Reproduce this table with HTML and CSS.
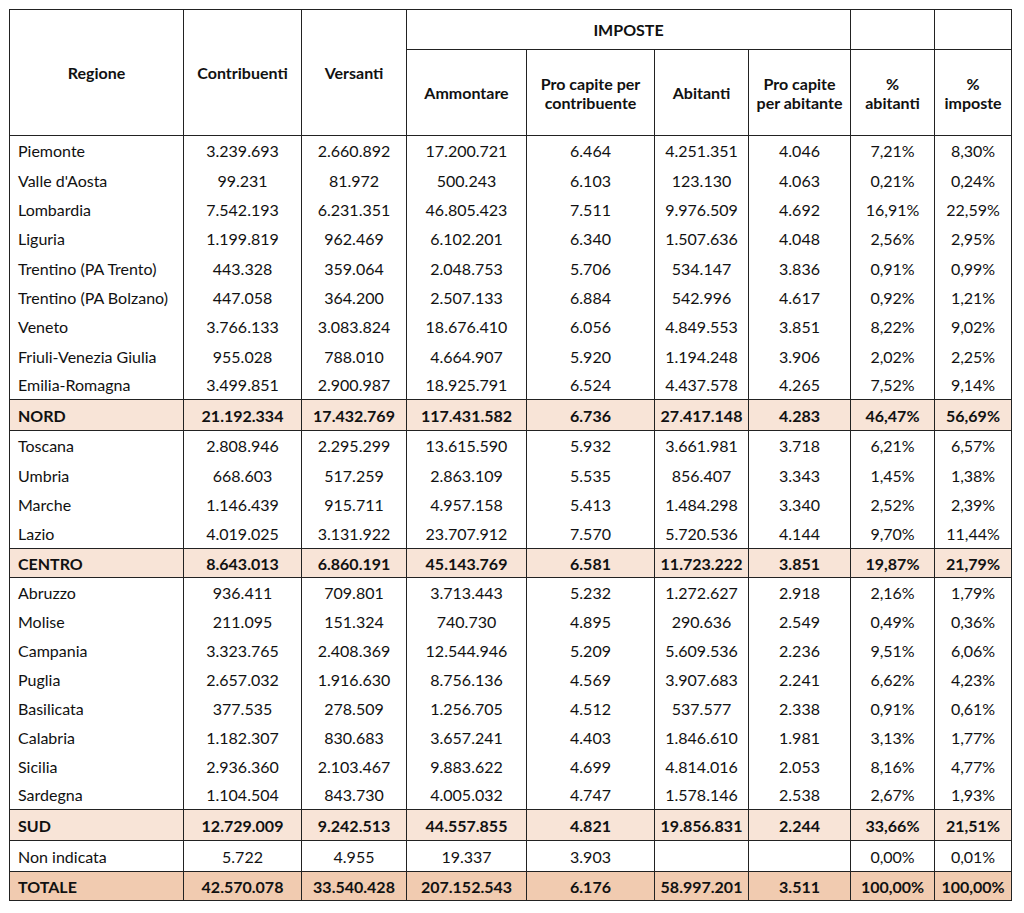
FILE: index.html
```html
<!DOCTYPE html>
<html lang="it">
<head>
<meta charset="utf-8">
<title>Imposte per regione</title>
<link rel="stylesheet" href="styles.css">
</head>
<body>
<table class="tax">
  <colgroup>
    <col class="c-reg"><col class="c-contr"><col class="c-vers"><col class="c-amm"><col class="c-pcc"><col class="c-ab"><col class="c-pca"><col class="c-pab"><col class="c-pimp">
  </colgroup>
  <thead>
    <tr class="h1">
      <th rowspan="2">Regione</th>
      <th rowspan="2">Contribuenti</th>
      <th rowspan="2">Versanti</th>
      <th colspan="4">IMPOSTE</th>
      <th></th>
      <th></th>
    </tr>
    <tr class="h2">
      <th>Ammontare</th>
      <th>Pro capite per<br>contribuente</th>
      <th>Abitanti</th>
      <th>Pro capite<br>per abitante</th>
      <th>%<br>abitanti</th>
      <th>%<br>imposte</th>
    </tr>
  </thead>
  <tbody class="grp">
    <tr class="r30"><td>Piemonte</td><td>3.239.693</td><td>2.660.892</td><td>17.200.721</td><td>6.464</td><td>4.251.351</td><td>4.046</td><td>7,21%</td><td>8,30%</td></tr>
    <tr class="r29"><td>Valle d'Aosta</td><td>99.231</td><td>81.972</td><td>500.243</td><td>6.103</td><td>123.130</td><td>4.063</td><td>0,21%</td><td>0,24%</td></tr>
    <tr class="r29"><td>Lombardia</td><td>7.542.193</td><td>6.231.351</td><td>46.805.423</td><td>7.511</td><td>9.976.509</td><td>4.692</td><td>16,91%</td><td>22,59%</td></tr>
    <tr class="r30"><td>Liguria</td><td>1.199.819</td><td>962.469</td><td>6.102.201</td><td>6.340</td><td>1.507.636</td><td>4.048</td><td>2,56%</td><td>2,95%</td></tr>
    <tr class="r29"><td>Trentino (PA Trento)</td><td>443.328</td><td>359.064</td><td>2.048.753</td><td>5.706</td><td>534.147</td><td>3.836</td><td>0,91%</td><td>0,99%</td></tr>
    <tr class="r29"><td>Trentino (PA Bolzano)</td><td>447.058</td><td>364.200</td><td>2.507.133</td><td>6.884</td><td>542.996</td><td>4.617</td><td>0,92%</td><td>1,21%</td></tr>
    <tr class="r30"><td>Veneto</td><td>3.766.133</td><td>3.083.824</td><td>18.676.410</td><td>6.056</td><td>4.849.553</td><td>3.851</td><td>8,22%</td><td>9,02%</td></tr>
    <tr class="r29"><td>Friuli-Venezia Giulia</td><td>955.028</td><td>788.010</td><td>4.664.907</td><td>5.920</td><td>1.194.248</td><td>3.906</td><td>2,02%</td><td>2,25%</td></tr>
    <tr class="r29"><td>Emilia-Romagna</td><td>3.499.851</td><td>2.900.987</td><td>18.925.791</td><td>6.524</td><td>4.437.578</td><td>4.265</td><td>7,52%</td><td>9,14%</td></tr>
  </tbody>
  <tbody class="sub">
    <tr class="r31"><td>NORD</td><td>21.192.334</td><td>17.432.769</td><td>117.431.582</td><td>6.736</td><td>27.417.148</td><td>4.283</td><td>46,47%</td><td>56,69%</td></tr>
  </tbody>
  <tbody class="grp">
    <tr class="r30"><td>Toscana</td><td>2.808.946</td><td>2.295.299</td><td>13.615.590</td><td>5.932</td><td>3.661.981</td><td>3.718</td><td>6,21%</td><td>6,57%</td></tr>
    <tr class="r29"><td>Umbria</td><td>668.603</td><td>517.259</td><td>2.863.109</td><td>5.535</td><td>856.407</td><td>3.343</td><td>1,45%</td><td>1,38%</td></tr>
    <tr class="r29"><td>Marche</td><td>1.146.439</td><td>915.711</td><td>4.957.158</td><td>5.413</td><td>1.484.298</td><td>3.340</td><td>2,52%</td><td>2,39%</td></tr>
    <tr class="r30"><td>Lazio</td><td>4.019.025</td><td>3.131.922</td><td>23.707.912</td><td>7.570</td><td>5.720.536</td><td>4.144</td><td>9,70%</td><td>11,44%</td></tr>
  </tbody>
  <tbody class="sub">
    <tr class="r29"><td>CENTRO</td><td>8.643.013</td><td>6.860.191</td><td>45.143.769</td><td>6.581</td><td>11.723.222</td><td>3.851</td><td>19,87%</td><td>21,79%</td></tr>
  </tbody>
  <tbody class="grp">
    <tr class="r29"><td>Abruzzo</td><td>936.411</td><td>709.801</td><td>3.713.443</td><td>5.232</td><td>1.272.627</td><td>2.918</td><td>2,16%</td><td>1,79%</td></tr>
    <tr class="r29"><td>Molise</td><td>211.095</td><td>151.324</td><td>740.730</td><td>4.895</td><td>290.636</td><td>2.549</td><td>0,49%</td><td>0,36%</td></tr>
    <tr class="r29"><td>Campania</td><td>3.323.765</td><td>2.408.369</td><td>12.544.946</td><td>5.209</td><td>5.609.536</td><td>2.236</td><td>9,51%</td><td>6,06%</td></tr>
    <tr class="r29"><td>Puglia</td><td>2.657.032</td><td>1.916.630</td><td>8.756.136</td><td>4.569</td><td>3.907.683</td><td>2.241</td><td>6,62%</td><td>4,23%</td></tr>
    <tr class="r29"><td>Basilicata</td><td>377.535</td><td>278.509</td><td>1.256.705</td><td>4.512</td><td>537.577</td><td>2.338</td><td>0,91%</td><td>0,61%</td></tr>
    <tr class="r29"><td>Calabria</td><td>1.182.307</td><td>830.683</td><td>3.657.241</td><td>4.403</td><td>1.846.610</td><td>1.981</td><td>3,13%</td><td>1,77%</td></tr>
    <tr class="r29"><td>Sicilia</td><td>2.936.360</td><td>2.103.467</td><td>9.883.622</td><td>4.699</td><td>4.814.016</td><td>2.053</td><td>8,16%</td><td>4,77%</td></tr>
    <tr class="r29"><td>Sardegna</td><td>1.104.504</td><td>843.730</td><td>4.005.032</td><td>4.747</td><td>1.578.146</td><td>2.538</td><td>2,67%</td><td>1,93%</td></tr>
  </tbody>
  <tbody class="sub">
    <tr class="r31"><td>SUD</td><td>12.729.009</td><td>9.242.513</td><td>44.557.855</td><td>4.821</td><td>19.856.831</td><td>2.244</td><td>33,66%</td><td>21,51%</td></tr>
  </tbody>
  <tbody class="grp">
    <tr class="r31"><td>Non indicata</td><td>5.722</td><td>4.955</td><td>19.337</td><td>3.903</td><td></td><td></td><td>0,00%</td><td>0,01%</td></tr>
  </tbody>
  <tbody class="tot">
    <tr class="r29"><td>TOTALE</td><td>42.570.078</td><td>33.540.428</td><td>207.152.543</td><td>6.176</td><td>58.997.201</td><td>3.511</td><td>100,00%</td><td>100,00%</td></tr>
  </tbody>
</table>
</body>
</html>
```

FILE: styles.css
```css
html, body {
  margin: 0;
  padding: 0;
  background: #ffffff;
}

body {
  font-family: Lato, "Open Sans", "Liberation Sans", sans-serif;
  color: #111111;
}

.tax {
  margin: 9px 0 0 9px;
  width: 1002px;
  table-layout: fixed;
  border-collapse: collapse;
  font-size: 16px;
  line-height: 19px;
}

.c-reg { width: 174px; }
.c-contr { width: 118px; }
.c-vers { width: 105px; }
.c-amm { width: 120px; }
.c-pcc { width: 128px; }
.c-ab { width: 94px; }
.c-pca { width: 102px; }
.c-pab { width: 84px; }
.c-pimp { width: 77px; }

.tax th,
.tax td {
  padding: 0;
  text-align: center;
  vertical-align: middle;
  white-space: nowrap;
  border-left: 1px solid #222222;
  border-right: 1px solid #222222;
}

.tax th {
  font-weight: 700;
  border: 1px solid #222222;
}

.tax td:first-child {
  text-align: left;
  padding-left: 8px;
}

.tax .h1 { height: 40px; }
.tax .h2 { height: 86px; }

.tax .r29 { height: 29px; }
.tax .r30 { height: 30px; }
.tax .r31 { height: 31px; }

.tax tbody {
  border-top: 1px solid #222222;
  border-bottom: 1px solid #222222;
}

.tax .sub td {
  background: #f8e4d7;
  font-weight: 700;
}

.tax .tot td {
  background: #f1cbb0;
  font-weight: 700;
}
```
